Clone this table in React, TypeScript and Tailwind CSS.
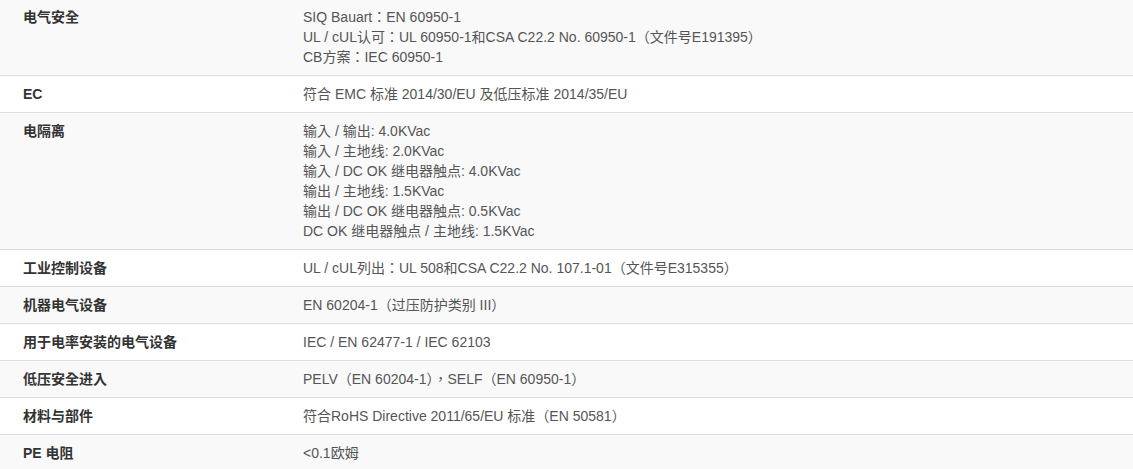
import React from "react";

interface SpecRow {
  label: string;
  lines: string[];
}

const rows: SpecRow[] = [
  {
    label: "电气安全",
    lines: [
      "SIQ Bauart：EN 60950-1",
      "UL / cUL认可：UL 60950-1和CSA C22.2 No. 60950-1（文件号E191395）",
      "CB方案：IEC 60950-1",
    ],
  },
  { label: "EC", lines: ["符合 EMC 标准 2014/30/EU 及低压标准 2014/35/EU"] },
  {
    label: "电隔离",
    lines: [
      "输入 / 输出: 4.0KVac",
      "输入 / 主地线: 2.0KVac",
      "输入 / DC OK 继电器触点: 4.0KVac",
      "输出 / 主地线: 1.5KVac",
      "输出 / DC OK 继电器触点: 0.5KVac",
      "DC OK 继电器触点 / 主地线: 1.5KVac",
    ],
  },
  {
    label: "工业控制设备",
    lines: ["UL / cUL列出：UL 508和CSA C22.2 No. 107.1-01（文件号E315355）"],
  },
  { label: "机器电气设备", lines: ["EN 60204-1（过压防护类别 III）"] },
  { label: "用于电率安装的电气设备", lines: ["IEC / EN 62477-1 / IEC 62103"] },
  { label: "低压安全进入", lines: ["PELV（EN 60204-1），SELF（EN 60950-1）"] },
  { label: "材料与部件", lines: ["符合RoHS Directive 2011/65/EU 标准（EN 50581）"] },
  { label: "PE 电阻", lines: ["<0.1欧姆"] },
];

export default function App() {
  return (
    <div
      className="w-[1133px] h-[469px] overflow-hidden bg-white text-[14px] leading-[20px] text-[#333]"
      style={{ fontFamily: '"Liberation Sans", Arial, "Noto Sans CJK TC", sans-serif' }}
    >
      {rows.map((row, i) => (
        <div
          key={row.label}
          className={`grid grid-cols-[295px_1fr] ${i === 0 ? "" : "border-t border-[#ddd]"} ${
            i % 2 === 0 ? "bg-[#f9f9f9]" : "bg-white"
          }`}
        >
          <div className={`pl-[23px] pr-2 pb-2 font-bold text-[#333] ${i === 0 ? "pt-[7px]" : "pt-2"}`}>
            {row.label}
          </div>
          <div className={`px-2 pb-2 text-[#555] ${i === 0 ? "pt-[7px]" : "pt-2"}`}>
            {row.lines.map((line) => (
              <div key={line}>{line}</div>
            ))}
          </div>
        </div>
      ))}
    </div>
  );
}
